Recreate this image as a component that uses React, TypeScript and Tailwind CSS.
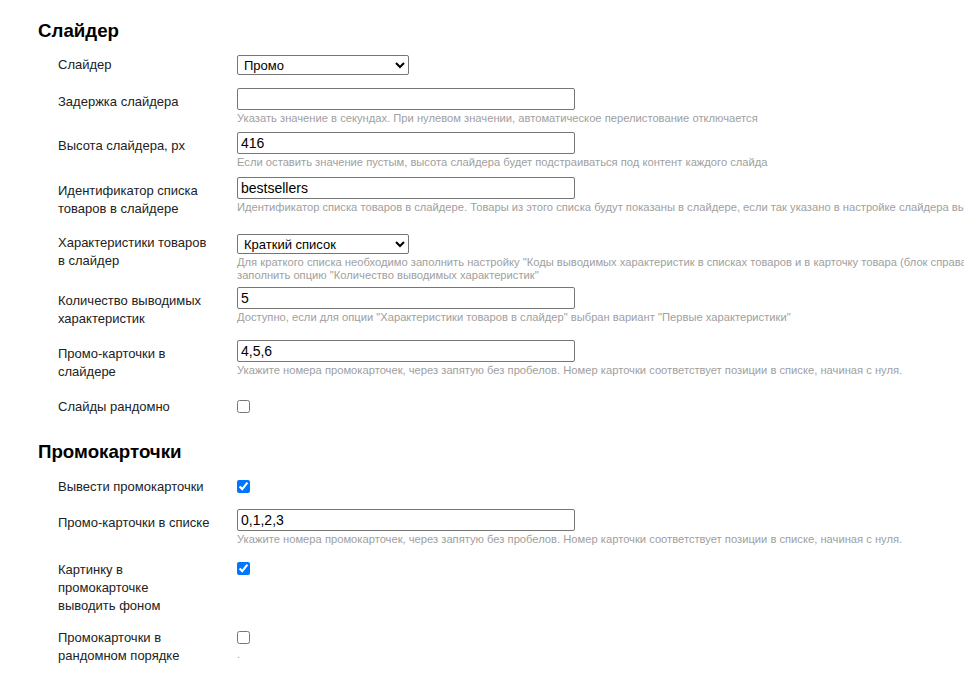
import React from "react";

const font = { fontFamily: '"Liberation Sans", Arial, sans-serif' };

function Label({ children, pt }: { children: React.ReactNode; pt: string }) {
  return (
    <div className={`w-[156px] shrink-0 mr-[23px] text-[13px] leading-[18px] text-[#222] ${pt}`}>
      {children}
    </div>
  );
}

function Hint({ children }: { children: React.ReactNode }) {
  return <div className="mt-[2px] text-[11.2px] leading-[13px] text-[#a0a0a0]">{children}</div>;
}

function TextInput({ value }: { value: string }) {
  return (
    <input
      type="text"
      defaultValue={value}
      className="block w-[338px] h-[22px] border border-[#767676] rounded-[2px] px-[3px] text-[14px] text-black bg-white"
      style={font}
    />
  );
}

function Select({ value, options }: { value: string; options: string[] }) {
  return (
    <select
      defaultValue={value}
      className="block w-[172px] h-[20px] border border-[#767676] rounded-[2px] pl-[2px] text-[13px] text-black bg-white"
      style={font}
    >
      {options.map((o) => (
        <option key={o}>{o}</option>
      ))}
    </select>
  );
}

function Check({ checked }: { checked?: boolean }) {
  return <input type="checkbox" defaultChecked={checked} className="block w-[13px] h-[13px] m-0" />;
}

function Col({ children, className = "" }: { children: React.ReactNode; className?: string }) {
  return <div className={`w-[990px] shrink-0 ${className}`}>{children}</div>;
}

export default function App() {
  return (
    <div className="w-[964px] h-[687px] overflow-hidden bg-white text-black" style={font}>
      <div className="pl-[38px] pt-[19px]">
        <h2 className="text-[18.72px] leading-[23px] font-bold">Слайдер</h2>

        <div className="pl-[20px]">
          <div className="flex items-start mt-[13px]">
            <Label pt="pt-[1px]">Слайдер</Label>
            <Col>
              <Select value="Промо" options={["Промо", "Товары", "Нет"]} />
            </Col>
          </div>

          <div className="flex items-start mt-[13px]">
            <Label pt="pt-[5px]">Задержка слайдера</Label>
            <Col>
              <TextInput value="" />
              <Hint>Указать значение в секундах. При нулевом значении, автоматическое перелистование отключается</Hint>
            </Col>
          </div>

          <div className="flex items-start mt-[7px]">
            <Label pt="pt-[5px]">Высота слайдера, px</Label>
            <Col>
              <TextInput value="416" />
              <Hint>Если оставить значение пустым, высота слайдера будет подстраиваться под контент каждого слайда</Hint>
            </Col>
          </div>

          <div className="flex items-start mt-[8px]">
            <Label pt="pt-[5px]">Идентификатор списка товаров в слайдере</Label>
            <Col>
              <TextInput value="bestsellers" />
              <Hint>
                Идентификатор списка товаров в слайдере. Товары из этого списка будут показаны в слайдере, если так указано в настройке слайдера выше
              </Hint>
            </Col>
          </div>

          <div className="flex items-start mt-[16px]">
            <Label pt="pt-0">Характеристики товаров в слайдер</Label>
            <Col>
              <Select value="Краткий список" options={["Краткий список", "Первые характеристики", "Нет"]} />
              <Hint>
                Для краткого списка необходимо заполнить настройку "Коды выводимых характеристик в списках товаров и в карточку товара (блок справа)", для вывода первых характеристик необходимо заполнить опцию "Количество выводимых характеристик"
              </Hint>
            </Col>
          </div>

          <div className="flex items-start mt-[5px]">
            <Label pt="pt-[5px]">Количество выводимых характеристик</Label>
            <Col>
              <TextInput value="5" />
              <Hint>Доступно, если для опции "Характеристики товаров в слайдер" выбран вариант "Первые характеристики"</Hint>
            </Col>
          </div>

          <div className="flex items-start mt-[12px]">
            <Label pt="pt-[5px]">Промо-карточки в слайдере</Label>
            <Col>
              <TextInput value="4,5,6" />
              <Hint>Укажите номера промокарточек, через запятую без пробелов. Номер карточки соответствует позиции в списке, начиная с нуля.</Hint>
            </Col>
          </div>

          <div className="flex items-start mt-[17px]">
            <Label pt="pt-0">Слайды рандомно</Label>
            <Col className="pt-[2px]">
              <Check />
            </Col>
          </div>
        </div>

        <h2 className="text-[18.72px] leading-[23px] font-bold mt-[24px]">Промокарточки</h2>

        <div className="pl-[20px]">
          <div className="flex items-start mt-[15px]">
            <Label pt="pt-0">Вывести промокарточки</Label>
            <Col className="pt-[2px]">
              <Check checked />
            </Col>
          </div>

          <div className="flex items-start mt-[13px]">
            <Label pt="pt-[5px]">Промо-карточки в списке</Label>
            <Col>
              <TextInput value="0,1,2,3" />
              <Hint>Укажите номера промокарточек, через запятую без пробелов. Номер карточки соответствует позиции в списке, начиная с нуля.</Hint>
            </Col>
          </div>

          <div className="flex items-start mt-[15px]">
            <Label pt="pt-0">{"Картинку в промокарточке выводить\u00a0фоном"}</Label>
            <Col className="pt-[1px]">
              <Check checked />
            </Col>
          </div>

          <div className="flex items-start mt-[14px]">
            <Label pt="pt-0">Промокарточки в рандомном порядке</Label>
            <Col className="pt-[2px]">
              <Check />
              <div className="mt-[4px] text-[11px] leading-[13px] text-[#a0a0a0]">.</div>
            </Col>
          </div>
        </div>
      </div>
    </div>
  );
}
